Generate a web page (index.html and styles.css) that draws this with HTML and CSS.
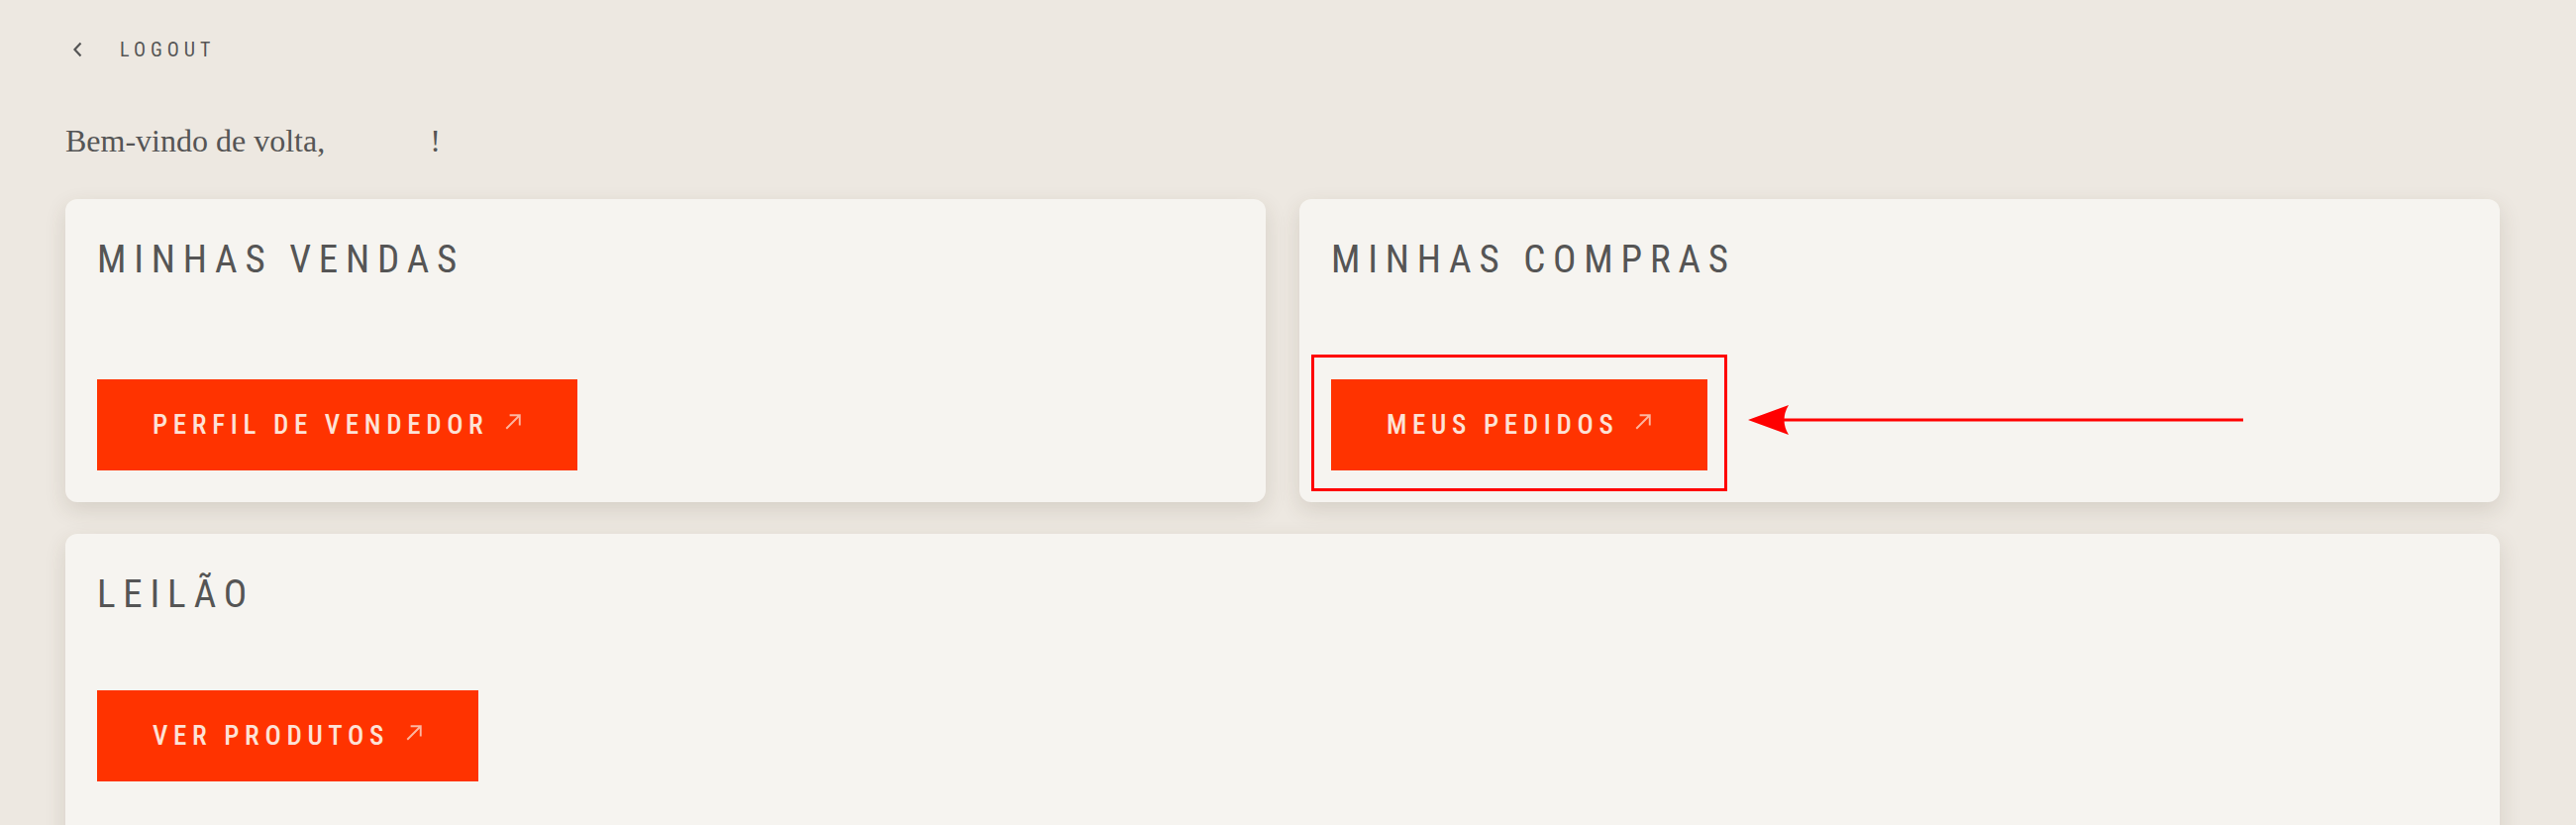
FILE: index.html
```html
<!DOCTYPE html>
<html lang="pt-BR">
<head>
    <meta charset="UTF-8">
    <meta name="viewport" content="width=device-width, initial-scale=1.0">
    <title>Minha Conta</title>
    <link rel="stylesheet" href="styles.css">
</head>
<body>
    <nav class="topbar">
        <a href="#" class="back-link">
            <svg class="back-icon" width="11" height="16" viewBox="0 0 11 16" fill="none">
                <path d="M8.5 1.5 L2.5 8 L8.5 14.5" stroke="#555" stroke-width="2.2"/>
            </svg>
            <span>Logout</span>
        </a>
    </nav>

    <p class="welcome">Bem-vindo de volta, <span class="user-name"></span>!</p>

    <div class="dashboard">
        <section class="card card--top">
            <h2 class="card-title">Minhas Vendas</h2>
            <a href="#" class="btn">Perfil de Vendedor
                <svg class="btn-arrow" width="18" height="18" viewBox="0 0 16 16" fill="none">
                    <path d="M2 14 L14 2 M5 2 H14 V11" stroke="currentColor" stroke-width="1.7"/>
                </svg>
            </a>
        </section>

        <section class="card card--top">
            <h2 class="card-title">Minhas Compras</h2>
            <div class="callout">
                <a href="#" class="btn">Meus Pedidos
                    <svg class="btn-arrow" width="18" height="18" viewBox="0 0 16 16" fill="none">
                        <path d="M2 14 L14 2 M5 2 H14 V11" stroke="currentColor" stroke-width="1.7"/>
                    </svg>
                </a>
                <span class="callout-box"></span>
                <svg class="callout-arrow" width="500" height="32" viewBox="0 0 500 32">
                    <rect x="34" y="14.5" width="466" height="3" fill="#ff0000"/>
                    <path d="M0 16 L41 1 Q32 16 41 31 Z" fill="#ff0000"/>
                </svg>
            </div>
        </section>

        <section class="card card--wide">
            <h2 class="card-title">Leilão</h2>
            <a href="#" class="btn">Ver Produtos
                <svg class="btn-arrow" width="18" height="18" viewBox="0 0 16 16" fill="none">
                    <path d="M2 14 L14 2 M5 2 H14 V11" stroke="currentColor" stroke-width="1.7"/>
                </svg>
            </a>
        </section>
    </div>
</body>
</html>
```

FILE: styles.css
```css
body {
    margin: 0;
    padding: 0 77px 0 66px;
    background: #ede8e1;
    color: #555;
    font-family: "Roboto Condensed", "DejaVu Sans Condensed", Roboto, sans-serif;
    font-stretch: condensed;
}

.topbar {
    padding-top: 38px;
}

.back-link {
    display: inline-flex;
    align-items: center;
    gap: 37px;
    padding-left: 7px;
    color: #555;
    text-decoration: none;
    text-transform: uppercase;
    font-size: 20px;
    letter-spacing: 0.25em;
}

.welcome {
    margin: 62px 0 0;
    font-family: "Liberation Serif", serif;
    font-size: 32px;
    color: #555;
}

.user-name {
    display: inline-block;
    width: 98px;
}

.dashboard {
    display: grid;
    grid-template-columns: 1fr 1fr;
    column-gap: 34px;
    row-gap: 32px;
    margin-top: 40px;
}

.card {
    background: #f6f4f0;
    border-radius: 12px;
    box-shadow: 0 8px 22px rgba(70, 55, 35, 0.14);
    padding: 32px;
    display: flex;
    flex-direction: column;
    align-items: flex-start;
}

.card--top {
    min-height: 306px;
    box-sizing: border-box;
}

.card--top .btn,
.card--top .callout {
    margin-top: auto;
}

.card--wide {
    grid-column: 1 / -1;
    min-height: 360px;
    box-sizing: border-box;
}

.card-title {
    margin: 6px 0 0;
    font-size: 39px;
    font-weight: 400;
    letter-spacing: 0.2em;
    text-transform: uppercase;
    color: #555;
}

.card--wide .btn {
    margin-top: 74px;
}

.btn {
    display: inline-flex;
    align-items: center;
    gap: 16px;
    height: 92px;
    padding: 0 56px;
    box-sizing: border-box;
    background: #ff3300;
    color: #fde2d6;
    text-decoration: none;
    text-transform: uppercase;
    font-size: 27px;
    font-weight: 500;
    letter-spacing: 0.21em;
}

.btn-arrow {
    margin-top: -6px;
    opacity: 0.75;
}

.callout {
    position: relative;
}

.callout-box {
    position: absolute;
    left: -20px;
    right: -20px;
    top: -25px;
    bottom: -21px;
    border: 3px solid #ff0000;
}

.callout-arrow {
    position: absolute;
    left: calc(100% + 41px);
    top: 25px;
}
```
